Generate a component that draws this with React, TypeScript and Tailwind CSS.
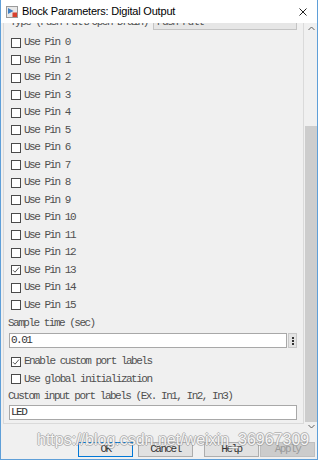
import React from "react";

const mono = { fontFamily: '"Liberation Mono", "Courier New", monospace' };

function Check({ checked, label }: { checked?: boolean; label: string }) {
  return (
    <div className="flex h-[17.5px] items-center">
      <span className="ml-[7px] flex h-[10px] w-[10px] items-center justify-center border border-[#4a4a4a] bg-white">
        {checked && (
          <svg width="8" height="8" viewBox="0 0 8 8">
            <path d="M1 4.2 L3 6.2 L7 1.5" fill="none" stroke="#555" strokeWidth="1" />
          </svg>
        )}
      </span>
      <span className="ml-[3px] text-[11px] leading-none tracking-[-1.5px] text-[#505050]">{label}</span>
    </div>
  );
}

function TitleIcon() {
  return (
    <svg width="12" height="12" viewBox="0 0 12 12">
      <rect x="0.5" y="0.5" width="11" height="11" fill="#e8e8e8" stroke="#9a9a9a" />
      <path d="M2 2 L7.5 5 L2 8 Z" fill="#3f7fc4" />
      <rect x="6.5" y="6.5" width="4.5" height="4.5" fill="#d8412f" />
    </svg>
  );
}

export default function App() {
  const pins = Array.from({ length: 16 }, (_, i) => i);

  return (
    <div className="flex h-[460px] w-[318px] flex-col overflow-hidden border-x border-b border-[#5f9fd8] bg-[#f0f0f0]" style={mono}>
      {/* title bar */}
      <div className="flex h-[23px] shrink-0 items-center bg-white pl-[5px] pr-[10px]">
        <TitleIcon />
        <span className="ml-[4px] text-[11px] tracking-[-0.2px] text-black" style={{ fontFamily: '"Liberation Sans", Arial, sans-serif' }}>
          Block Parameters: Digital Output
        </span>
        <svg className="ml-auto" width="8" height="8" viewBox="0 0 8 8">
          <path d="M0.5 0.5 L7.5 7.5 M7.5 0.5 L0.5 7.5" stroke="#222" strokeWidth="1" />
        </svg>
      </div>

      {/* scroll area */}
      <div className="flex h-[411px] shrink-0">
        <div className="flex-1 overflow-hidden pl-[2px] pr-[1px]">
          <div className="mt-[-10px] border border-[#dadada] pb-[1px]">
            <div className="flex h-[16px] items-center">
              <span className="ml-[6px] text-[11px] leading-none tracking-[-1.5px] text-[#505050]">Type (Push Pull/Open Drain)</span>
              <span className="ml-auto mr-[6px] flex h-[15px] w-[144px] items-center border border-[#c4c4c4] bg-[#e6e6e6] pl-[3px] text-[11px] leading-none tracking-[-1.5px] text-[#505050]">
                Push Pull
              </span>
            </div>
            <div className="mt-[4px]">
              {pins.map((p) => (
                <Check key={p} checked={p === 13} label={`Use Pin ${p}`} />
              ))}
            </div>
            <div className="flex h-[19px] items-center pl-[4px] text-[11px] leading-none tracking-[-1.5px] text-[#505050]">
              Sample time (sec)
            </div>
            <div className="flex h-[15px] items-center pl-[5px] pr-[6px]">
              <div className="flex h-[15px] flex-1 items-center border border-[#a8a8a8] bg-white pl-[1px] text-[11px] leading-none tracking-[-1.5px] text-[#333]">
                0.01
              </div>
              <div className="ml-[1px] flex h-[15px] w-[9px] flex-col items-center justify-center gap-[1px] border border-[#c8c8c8] bg-[#e4e4e4]">
                <span className="h-[2px] w-[2px] bg-[#333]" />
                <span className="h-[2px] w-[2px] bg-[#333]" />
                <span className="h-[2px] w-[2px] bg-[#333]" />
              </div>
            </div>
            <div className="mt-[5px]">
              <Check checked label="Enable custom port labels" />
              <Check label="Use global initialization" />
            </div>
            <div className="flex h-[17px] items-center pl-[4px] text-[11px] leading-none tracking-[-1.5px] text-[#505050]">
              Custom input port labels (Ex. In1, In2, In3)
            </div>
            <div className="flex h-[15px] items-center pl-[5px] pr-[6px]">
              <div className="flex h-[15px] flex-1 items-center border border-[#a8a8a8] bg-white pl-[1px] text-[11px] leading-none tracking-[-1.5px] text-[#333]">
                LED
              </div>
            </div>
            <div className="h-[2px]" />
          </div>
        </div>
        {/* scrollbar */}
        <div className="flex w-[12px] shrink-0 flex-col items-center bg-[#f0f0f0]">
          <svg className="mt-[3px] shrink-0" width="7" height="5" viewBox="0 0 7 5">
            <path d="M0.5 4 L3.5 1 L6.5 4" fill="none" stroke="#606060" strokeWidth="1" />
          </svg>
          <div className="mt-[95px] h-[296px] w-full bg-[#cdcdcd]" />
          <svg className="mt-[2px] shrink-0" width="7" height="5" viewBox="0 0 7 5">
            <path d="M0.5 1 L3.5 4 L6.5 1" fill="none" stroke="#606060" strokeWidth="1" />
          </svg>
        </div>
      </div>

      {/* buttons */}
      <div className="relative flex flex-1 items-start gap-[5px] pl-[77px] pt-[8px]">
        <button className="flex h-[15px] w-[55px] items-center justify-center border border-[#0078d7] bg-[#e9e9e9] text-[11px] leading-none tracking-[-1.5px] text-[#333]">OK</button>
        <button className="flex h-[15px] w-[55px] items-center justify-center border border-[#adadad] bg-[#e1e1e1] text-[11px] leading-none tracking-[-1.5px] text-[#333]">Cancel</button>
        <button className="ml-[6px] flex h-[15px] w-[55px] items-center justify-center border border-[#adadad] bg-[#e1e1e1] text-[11px] leading-none tracking-[-1.5px] text-[#333]">Help</button>
        <button className="ml-[-4px] flex h-[15px] w-[55px] items-center justify-center border border-[#bfbfbf] bg-[#cccccc] text-[11px] leading-none tracking-[-1.5px] text-[#9a9a9a]">Apply</button>
        <span
          className="pointer-events-none absolute left-[36px] top-[-6px] whitespace-nowrap text-[16px] text-white/90"
          style={{
            fontFamily: '"Liberation Sans", Arial, sans-serif',
            textShadow: "1px 0 0 rgba(140,140,140,0.55), -1px 0 0 rgba(140,140,140,0.55), 0 1px 0 rgba(140,140,140,0.55), 0 -1px 0 rgba(140,140,140,0.55)",
          }}
        >
          https://blog.csdn.net/weixin_36967309
        </span>
      </div>
    </div>
  );
}
